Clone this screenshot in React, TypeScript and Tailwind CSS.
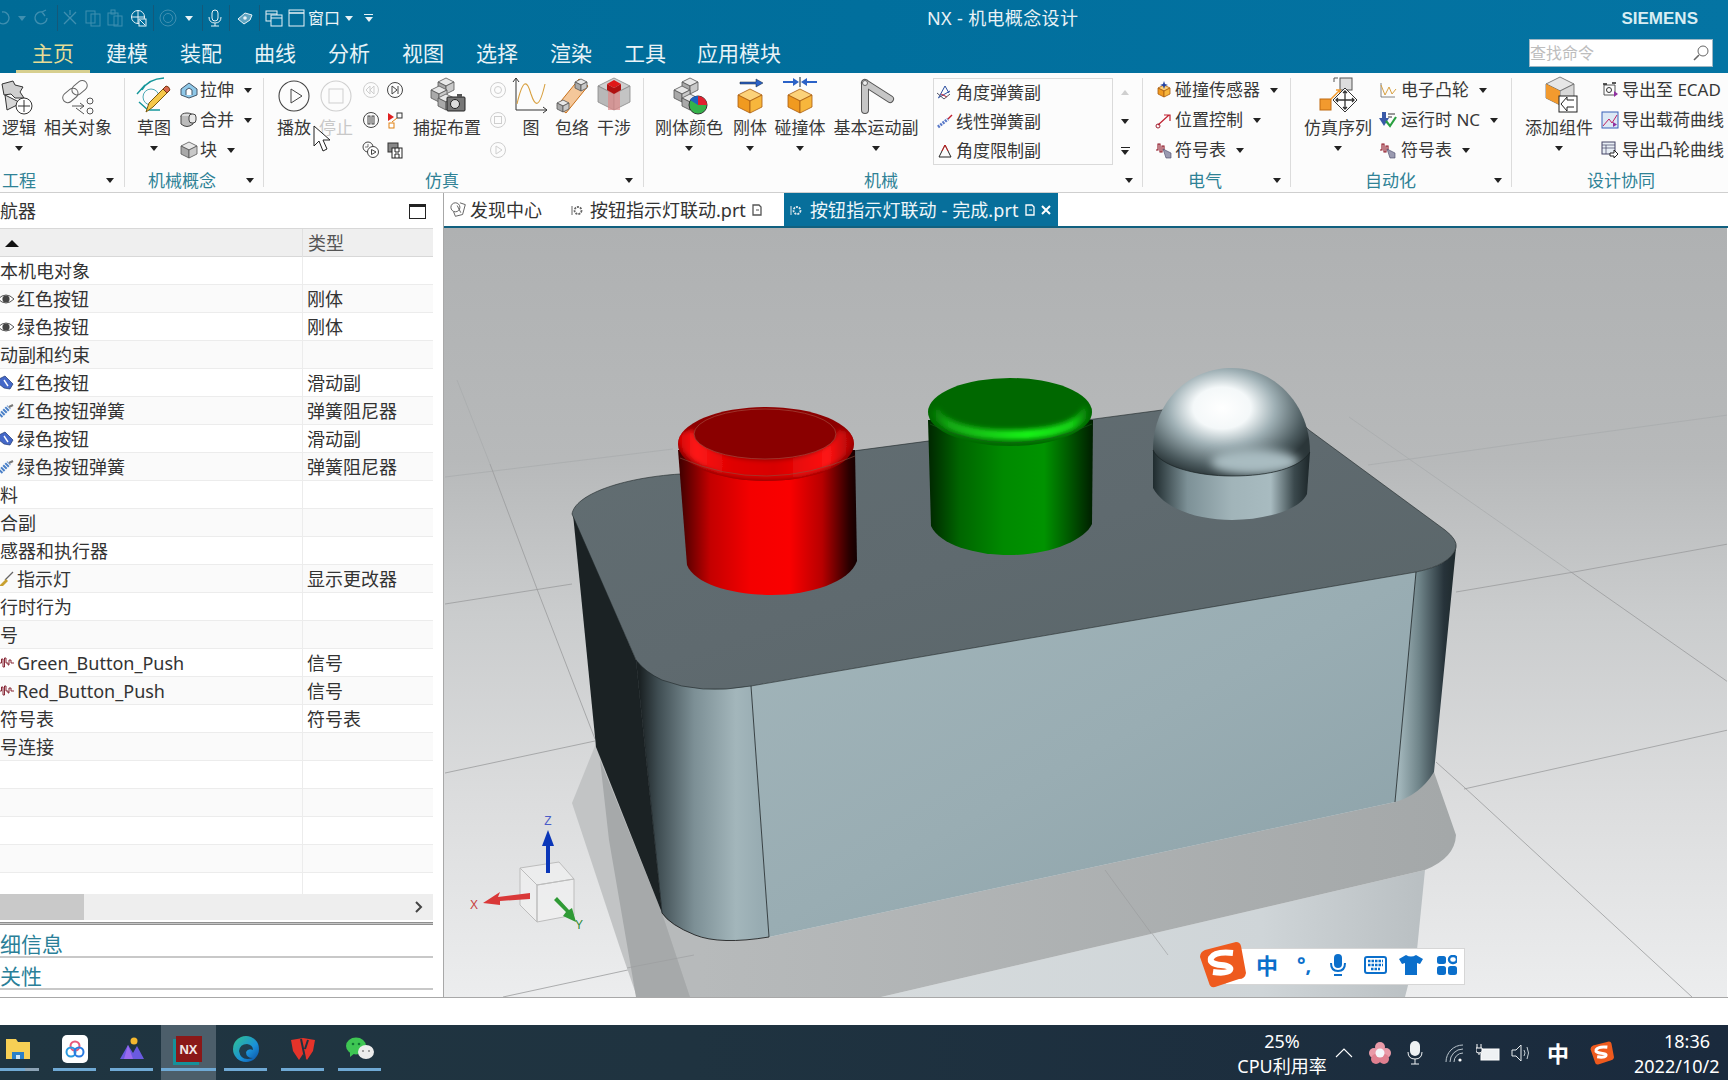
import React from "react";

const F = "font-['Noto_Sans','Noto_Sans_CJK_SC',sans-serif]";

function Caret({ c = "border-t-[#222]" }: { c?: string }) {
  return <span className={`inline-block w-0 h-0 border-x-[4px] border-t-[5px] border-x-transparent ${c}`} />;
}

function Cube({ x, y, s, a = "#e8e8e8", b = "#a9a9a9", c = "#c9c9c9", e = "#555" }: { x: number; y: number; s: number; a?: string; b?: string; c?: string; e?: string }) {
  const h = s * 0.5;
  return (
    <g stroke={e} strokeWidth="0.8" strokeLinejoin="round">
      <path d={`M${x},${y} L${x + s},${y + h} L${x},${y + s} L${x - s},${y + h} Z`} fill={a} />
      <path d={`M${x - s},${y + h} L${x},${y + s} L${x},${y + 2 * s} L${x - s},${y + 1.5 * s} Z`} fill={b} />
      <path d={`M${x + s},${y + h} L${x},${y + s} L${x},${y + 2 * s} L${x + s},${y + 1.5 * s} Z`} fill={c} />
    </g>
  );
}

function Ic({ s = 40, vb = 40, children }: { s?: number; vb?: number; children: React.ReactNode }) {
  return (
    <svg width={s} height={s} viewBox={`0 0 ${vb} ${vb}`} fill="none">
      {children}
    </svg>
  );
}

const Logic = () => (
  <Ic>
    <path d="M3,8 L14,5 L16,9 L24,11 L21,16 L25,22 L16,22 L12,18 L5,19 Z" fill="#cfcfcf" stroke="#333" />
    <path d="M6,19 L22,27 L8,34 Z" fill="#d8d8d8" stroke="#333" />
    <circle cx="25" cy="30" r="8" fill="#fff" stroke="#333" />
    <path d="M25,24 V36 M19,30 H31" stroke="#333" />
  </Ic>
);
const Rel = () => (
  <Ic>
    <g stroke="#666" fill="none" transform="rotate(-40 18 16)">
      <rect x="3" y="10" width="17" height="10" rx="5" />
      <rect x="15" y="10" width="17" height="10" rx="5" />
    </g>
    <path d="M14,30 H26 M22,27 L26,30 L22,33 M18,32 L26,38" stroke="#555" />
    <circle cx="32" cy="25" r="3" stroke="#555" />
    <circle cx="32" cy="35" r="3" stroke="#555" />
  </Ic>
);
const Sketch = () => (
  <Ic>
    <path d="M8,14 Q14,3 30,2 M3,18 L11,9 M5,26 L14,34 H26" stroke="#14969a" strokeWidth="1.4" />
    <circle cx="17" cy="21" r="8" stroke="#4aa8b4" />
    <path d="M12,36 L15,27 L31,11 L35,15 L19,31 Z" fill="#f5c84a" stroke="#7a5a10" />
    <path d="M29,13 L33,17 L36,14 Q35,10 32,10 Z" fill="#d96a50" stroke="#7a3a10" />
  </Ic>
);
const Sm = ({ children }: { children: React.ReactNode }) => (
  <svg width="18" height="18" viewBox="0 0 18 18" fill="none">
    {children}
  </svg>
);
const Ext = () => (
  <Sm>
    <path d="M1,8 L9,2 L17,8 V14 L9,17 L1,14 Z" fill="#8fc8e8" stroke="#456" />
    <path d="M6,14 V9 L9,7 L12,9 V14" fill="#fff" stroke="#456" />
  </Sm>
);
const Merge = () => (
  <Sm>
    <ellipse cx="7" cy="5" rx="6" ry="3" fill="#ddd" stroke="#444" />
    <path d="M1,5 V13 Q7,18 13,13 V5" fill="#bbb" stroke="#444" />
    <rect x="9" y="3" width="7" height="9" rx="3" fill="#e8e8e8" stroke="#444" />
  </Sm>
);
const Block = () => (
  <Sm>
    <Cube x={9} y={1} s={8} />
  </Sm>
);
const Round = ({ r = 15, c = "#444", children }: { r?: number; c?: string; children?: React.ReactNode }) => (
  <Ic s={r * 2 + 4} vb={r * 2 + 4}>
    <circle cx={r + 2} cy={r + 2} r={r} stroke={c} strokeWidth="1.1" />
    {children}
  </Ic>
);
const SC = ({ c = "#444", children }: { c?: string; children?: React.ReactNode }) => (
  <Sm>
    <circle cx="9" cy="9" r="7.5" stroke={c} />
    {children}
  </Sm>
);
const Capture = () => (
  <Ic>
    <Cube x={19} y={2} s={8} />
    <Cube x={12} y={10} s={8} />
    <Cube x={19} y={18} s={8} />
    <rect x="20" y="21" width="18" height="14" rx="1" fill="#777" stroke="#222" />
    <rect x="30" y="18" width="5" height="3" fill="#555" />
    <circle cx="28" cy="28" r="4.5" fill="#ddd" stroke="#222" />
  </Ic>
);
const Graph = () => (
  <Ic>
    <path d="M5,2 V34 H36 M2,6 L5,2 L8,6 M32,31 L36,34 L32,37" stroke="#333" />
    <path d="M6,28 C12,2 16,4 20,18 C24,30 28,34 34,8" stroke="#d8a040" strokeWidth="1.1" />
  </Ic>
);
const Envelope = () => (
  <Ic>
    <path d="M27,3 L36,10 L14,37 L5,30 Z" fill="#f4c79a" stroke="#c8701a" />
    <Cube x={29} y={3} s={6} />
    <Cube x={11} y={24} s={6} />
  </Ic>
);
const Interf = () => (
  <Ic>
    <Cube x={20} y={2} s={16} a="#d0d0d0" b="#b8b8b8" c="#c4c4c4" e="#888" />
    <rect x="14" y="12" width="12" height="22" fill="#d88" opacity=".7" />
    <path d="M20,4 L27,8 L20,12 L13,8 Z" fill="#e01818" />
    <path d="M13,8 L20,12 V18 L13,14 Z M27,8 L20,12 V18 L27,14 Z" fill="#b01010" />
  </Ic>
);
const Color = () => (
  <Ic>
    <Cube x={21} y={2} s={8} />
    <Cube x={13} y={10} s={8} />
    <Cube x={21} y={18} s={8} />
    <circle cx="29" cy="29" r="9" fill="#35b24a" stroke="#333" />
    <path d="M29,29 V20 A9,9 0 0 1 38,29 Z" fill="#e02030" />
    <path d="M29,29 L21,24 A9,9 0 0 1 29,20 Z" fill="#2060c0" />
  </Ic>
);
const Rigid = () => (
  <Ic>
    <path d="M10,6 H26 V3 L33,7 L26,11 V8 H10 Z" fill="#2b62c8" stroke="#123" strokeWidth=".5" />
    <Cube x={20} y={13} s={12} a="#fcd27a" b="#f09a20" c="#f7b63c" e="#a85c10" />
  </Ic>
);
const Coll = () => (
  <Ic>
    <path d="M3,5 H13 V2 L19,6 L13,10 V7 H3 Z M37,5 H27 V2 L21,6 L27,10 V7 H37 Z" fill="#2b62c8" />
    <path d="M20,1 V11" stroke="#123" />
    <Cube x={20} y={13} s={12} a="#fcd27a" b="#f09a20" c="#f7b63c" e="#a85c10" />
  </Ic>
);
const Joint = () => (
  <Ic>
    <path d="M9,7 L34,23 M9,7 V34" stroke="#555" strokeWidth="8" strokeLinecap="round" />
    <path d="M9,7 L34,23 M9,7 V34" stroke="#c6c6c6" strokeWidth="6" strokeLinecap="round" />
    <circle cx="9" cy="7" r="2.5" fill="#eee" stroke="#666" />
  </Ic>
);
const Sensor = () => (
  <Sm>
    <Cube x={9} y={4} s={6} a="#fcd27a" b="#f09a20" c="#f7b63c" e="#a85c10" />
    <path d="M9,0 L10,3 L13,4 L10,5 L9,8 L8,5 L5,4 L8,3 Z" fill="#2040a0" />
  </Sm>
);
const Pos = () => (
  <Sm>
    <path d="M3,14 L14,4 M9,4 H15 V10" stroke="#c02030" strokeWidth="1.2" />
    <circle cx="3" cy="15" r="2" stroke="#a02030" />
  </Sm>
);
const Sig = () => (
  <Sm>
    <path d="M1,9 H3 V3 H5 V11 H7 V5 H9 V9" stroke="#8a1020" strokeWidth="1.1" />
    <path d="M8,8 L16,12 V17 H11 Z" fill="#9a9ab0" stroke="#446" strokeWidth=".6" />
  </Sm>
);
const SeqI = () => (
  <Ic>
    <rect x="22" y="2" width="12" height="12" fill="#ddd" stroke="#555" />
    <path d="M16,2 H20 M16,2 V6" stroke="#555" />
    <rect x="2" y="23" width="11" height="11" fill="#f29a2e" stroke="#c06a10" />
    <path d="M13,23 L22,14 M18,14 H22 V18" stroke="#f29a2e" strokeWidth="1.5" />
    <path d="M27,12 L39,24 L27,36 L15,24 Z" fill="#fff" stroke="#333" />
    <path d="M27,15 V33 M18,24 H36 M25,17 L27,15 L29,17 M25,31 L27,33 L29,31 M20,22 L18,24 L20,26 M34,22 L36,24 L34,26" stroke="#333" strokeWidth="1.3" />
  </Ic>
);
const Cam = () => (
  <Sm>
    <path d="M2,2 V16 H16" stroke="#666" strokeWidth=".8" />
    <path d="M2,4 L6,14 L10,6 L13,13 L17,8" stroke="#d8a040" />
  </Sm>
);
const RunNc = () => (
  <Sm>
    <path d="M3,1 H7 V7 H10 L5,15 L0,7 H3 Z" fill="#3a5aa8" />
    <path d="M7,10 L11,15 L17,6" stroke="#2aa040" strokeWidth="2.2" />
    <path d="M9,3 H16 M9,6 H13" stroke="#333" />
  </Sm>
);
const AddC = () => (
  <Ic>
    <Cube x={21} y={1} s={14} a="#e6e6e6" b="#f09a20" c="#d8d8d8" e="#666" />
    <path d="M7,8 L21,15 V29 L7,22 Z" fill="#f29a2e" />
    <rect x="20" y="20" width="18" height="16" fill="#fff" stroke="#222" />
    <path d="M35,24 H28 V21 L22,28 L28,35 V31 H35" fill="#fff" stroke="#222" />
  </Ic>
);
const ExpE = () => (
  <Sm>
    <path d="M3,4 H14 V14 H3 Z" stroke="#444" strokeWidth=".9" />
    <circle cx="8" cy="9" r="2.5" stroke="#333" />
    <path d="M2,3 H6 M11,2 H15" stroke="#222" strokeWidth="1.6" />
    <path d="M13,10 L17,13 L13,16 Z" fill="#9030a0" />
  </Sm>
);
const ExpL = () => (
  <Sm>
    <rect x="1" y="1" width="16" height="16" fill="#dce8f5" stroke="#3860b8" />
    <path d="M2,15 L8,8 L11,12 L16,4" stroke="#c02060" strokeWidth="1" />
    <path d="M12,11 L16,13.5 L12,16 Z" fill="#9030a0" />
  </Sm>
);
const ExpC = () => (
  <Sm>
    <rect x="1" y="1" width="13" height="12" fill="#e8eef5" stroke="#446" />
    <path d="M1,4 H14 M1,7 H14 M5,4 V13" stroke="#446" strokeWidth=".7" />
    <path d="M9,12 H13 V9 L17,13 L13,17 V15 H9 Z" fill="#fff" stroke="#222" />
  </Sm>
);
const GalA = () => (
  <Sm>
    <path d="M3,13 L9,2 L13,9 M2,14 L14,7" stroke="#2b4ea0" />
    <path d="M5,10 L11,13" stroke="#c02030" />
    <path d="M1,9 L8,15 L14,10" stroke="#556" />
  </Sm>
);
const GalB = () => (
  <Sm>
    <path d="M2,14 L12,6" stroke="#5878c8" strokeWidth="3" strokeDasharray="2 1" />
    <path d="M12,6 L16,2" stroke="#c02030" strokeWidth="1.5" />
  </Sm>
);
const GalC = () => (
  <Sm>
    <path d="M3,15 L9,3 L15,15 Z" stroke="#222" />
    <path d="M9,3 L6,9 M9,3 L12,9" stroke="#d02020" />
  </Sm>
);

function Big({ w, label, icon, caret, gray, ml = 0 }: { w: number; label: string; icon?: React.ReactNode; caret?: boolean; gray?: boolean; ml?: number }) {
  return (
    <div className="flex flex-col items-center flex-none" style={{ width: w, marginLeft: ml }}>
      <div className="h-[42px] flex items-center justify-center">{icon}</div>
      <div className={`h-[22px] leading-[22px] whitespace-nowrap text-[17px] ${gray ? "text-[#c8c8c8]" : "text-[#383838]"}`}>{label}</div>
      <div className="h-[18px] flex items-center">{caret && <Caret />}</div>
    </div>
  );
}

function Row({ icon, label, caret, iw = 22 }: { icon: React.ReactNode; label: string; caret?: boolean; iw?: number }) {
  return (
    <div className="h-[30px] flex items-center text-[17px] text-[#383838] whitespace-nowrap">
      <div className="flex-none flex justify-center" style={{ width: iw }}>
        {icon}
      </div>
      <span>{label}</span>
      {caret && (
        <span className="ml-[10px] flex items-center">
          <Caret />
        </span>
      )}
    </div>
  );
}

function Col({ ml, w = 20, items }: { ml: number; w?: number; items: React.ReactNode[] }) {
  return (
    <div className="flex-none" style={{ marginLeft: ml, width: w }}>
      {items.map((it, i) => (
        <div key={i} className="h-[30px] flex items-center justify-center">
          {it}
        </div>
      ))}
    </div>
  );
}

function Group({ w, label, pl, pr, caret = true, children }: { w: number; label: string; pl: number; pr: number; caret?: boolean; children: React.ReactNode }) {
  return (
    <div className="flex-none flex flex-col pt-[2px] overflow-hidden" style={{ width: w }}>
      <div className="h-[90px] flex">{children}</div>
      <div className="h-[27px] pt-[3px] flex items-center justify-between" style={{ paddingLeft: pl, paddingRight: pr }}>
        <span className="text-[17px] text-[#2f8296] whitespace-nowrap leading-none">{label}</span>
        {caret && <Caret />}
      </div>
    </div>
  );
}

const Sep = () => <div className="flex-none w-px my-[5px] -ml-px bg-[#dcdcdc]" />;

const QIcon = ({ children, w = 18 }: { children: React.ReactNode; w?: number }) => (
  <svg width={w} height="18" viewBox="0 0 18 18" fill="none" className="flex-none">
    {children}
  </svg>
);
const QDiv = () => <div className="flex-none w-px h-[26px] bg-[#14597a]" />;

function TopBar() {
  const dim = "#3f8fb0";
  return (
    <div className="h-[36px] flex items-center">
      <div className="w-[927px] flex-none flex items-center overflow-hidden">
        <div className="w-[12px] overflow-hidden flex justify-end flex-none">
          <QIcon>
            <path d="M3,9 A6,6 0 1 0 8,3" stroke={dim} strokeWidth="1.3" />
          </QIcon>
        </div>
        <span className="ml-[6px] flex items-center">
          <Caret c="border-t-[#3f8fb0]" />
        </span>
        <span className="ml-[6px]">
          <QIcon>
            <path d="M15,9 A6,6 0 1 1 10,3 M10,3 L14,1 M10,3 L13,7" stroke={dim} strokeWidth="1.3" />
          </QIcon>
        </span>
        <span className="ml-[7px]"><QDiv /></span>
        <span className="ml-[3px]">
          <QIcon>
            <path d="M3,3 L9,9 L15,3 M3,15 L9,9 L15,15 M9,1 V6" stroke={dim} strokeWidth="1.3" />
          </QIcon>
        </span>
        <span className="ml-[5px]">
          <QIcon>
            <rect x="2" y="2" width="9" height="12" stroke={dim} />
            <rect x="7" y="5" width="9" height="12" stroke={dim} />
          </QIcon>
        </span>
        <span className="ml-[4px]">
          <QIcon>
            <rect x="2" y="4" width="10" height="12" stroke={dim} />
            <rect x="8" y="7" width="8" height="10" stroke={dim} />
            <rect x="5" y="1" width="4" height="4" stroke={dim} />
          </QIcon>
        </span>
        <span className="ml-[6px]">
          <QIcon>
            <circle cx="8" cy="8" r="6.5" stroke="#e8f2f6" />
            <path d="M8,1 V15 M1,8 H15" stroke="#e8f2f6" />
            <rect x="9" y="10" width="7" height="7" fill="#006f9d" stroke="#e8f2f6" />
            <path d="M10,11 L15,16" stroke="#e8f2f6" />
          </QIcon>
        </span>
        <span className="ml-[5px]"><QDiv /></span>
        <span className="ml-[5px]">
          <QIcon>
            <circle cx="9" cy="9" r="8" stroke={dim} />
            <circle cx="9" cy="9" r="4.5" stroke={dim} />
          </QIcon>
        </span>
        <span className="ml-[8px] flex items-center"><Caret c="border-t-[#e8f2f6]" /></span>
        <span className="ml-[9px]"><QDiv /></span>
        <span className="ml-[3px]">
          <QIcon>
            <rect x="6" y="1" width="6" height="11" rx="3" stroke="#e8f2f6" />
            <path d="M3,8 Q3,14 9,14 Q15,14 15,8 M9,14 V17 M5,17 H13" stroke="#e8f2f6" />
          </QIcon>
        </span>
        <span className="ml-[5px]"><QDiv /></span>
        <span className="ml-[6px]">
          <QIcon>
            <path d="M2,10 L9,4 L16,6 L14,11 L8,15 Z" stroke="#e8f2f6" fill="#5da3c0" />
            <circle cx="9" cy="9" r="1.8" fill="#e8f2f6" />
          </QIcon>
        </span>
        <span className="ml-[5px]"><QDiv /></span>
        <span className="ml-[5px]">
          <QIcon>
            <rect x="1" y="2" width="11" height="10" stroke="#e8f2f6" />
            <rect x="6" y="6" width="11" height="11" fill="#006f9d" stroke="#e8f2f6" />
            <path d="M1,5 H12 M6,9 H17" stroke="#e8f2f6" />
          </QIcon>
        </span>
        <span className="ml-[5px]">
          <QIcon>
            <rect x="1" y="1" width="15" height="16" stroke="#e8f2f6" />
            <path d="M1,4 H16" stroke="#e8f2f6" strokeWidth="1.5" />
          </QIcon>
        </span>
        <span className="ml-[2px] text-[16px] text-[#eef5f8] leading-none whitespace-nowrap">窗口</span>
        <span className="ml-[5px] flex items-center"><Caret c="border-t-[#e8f2f6]" /></span>
        <span className="ml-[11px] flex flex-col items-center gap-[2px]">
          <span className="w-[9px] h-px bg-[#e8f2f6]" />
          <Caret c="border-t-[#e8f2f6]" />
        </span>
      </div>
      <div className="text-[18px] tracking-[0.35px] text-[#e9f2f6] whitespace-nowrap leading-none">NX - 机电概念设计</div>
      <div className="ml-auto mr-[30px] text-[17px] font-bold text-[#d8edf3] font-['Liberation_Sans',sans-serif] leading-none">SIEMENS</div>
    </div>
  );
}

function Menu() {
  const items: [string, number][] = [
    ["主页", 74],
    ["建模", 74],
    ["装配", 74],
    ["曲线", 74],
    ["分析", 74],
    ["视图", 74],
    ["选择", 74],
    ["渲染", 74],
    ["工具", 74],
    ["应用模块", 114],
  ];
  return (
    <div className="h-[37px] flex items-stretch pl-[16px]">
      {items.map(([t, w], i) => (
        <div
          key={t}
          className={`flex-none flex items-center justify-center pt-[1px] text-[21px] leading-none border-b-[3px] ${i === 0 ? "text-[#e6dd96] border-[#d7cf8f]" : "text-[#e8f3f7] border-transparent"}`}
          style={{ width: w }}
        >
          {t}
        </div>
      ))}
      <div className="ml-auto mr-[15px] mt-[3px] mb-[6px] w-[184px] bg-white border border-[#9fb7c4] flex items-center justify-between">
        <span className="text-[16px] text-[#bdbdbd] leading-none">查找命令</span>
        <svg width="18" height="18" viewBox="0 0 18 18" fill="none" className="mr-[2px]">
          <circle cx="11" cy="7" r="5" stroke="#666" />
          <path d="M7,11 L2,16" stroke="#666" strokeWidth="1.6" />
        </svg>
      </div>
    </div>
  );
}

function Ribbon() {
  const g = "#cfcfcf";
  return (
    <div className="h-[120px] flex bg-[#fcfcfc] border-b border-[#cfcfcf] overflow-hidden relative">
      <Group w={125} label="工程" pl={2} pr={11}>
        <Big w={38} label="逻辑" icon={<Logic />} caret />
        <Big ml={6} w={68} label="相关对象" icon={<Rel />} />
      </Group>
      <Sep />
      <Group w={139} label="机械概念" pl={23} pr={10}>
        <Big ml={12} w={34} label="草图" icon={<Sketch />} caret />
        <div className="ml-[7px] flex-none">
          <Row icon={<Ext />} label="拉伸" caret />
          <Row icon={<Merge />} label="合并" caret />
          <Row icon={<Block />} label="块" caret />
        </div>
      </Group>
      <Sep />
      <Group w={380} label="仿真" pl={161} pr={11}>
        <Big ml={12} w={36} label="播放" icon={<Round><path d="M14,10 L25,17 L14,24 Z" stroke="#444" /></Round>} />
        <Big ml={6} w={36} gray label="停止" icon={<Round c={g}><rect x="10" y="10" width="14" height="14" stroke={g} /></Round>} />
        <Col
          ml={7}
          items={[
            <SC c={g}><path d="M4,9 L8,5 V13 Z M8,9 L12,5 V13 Z" stroke={g} /></SC>,
            <SC><rect x="6" y="5" width="2" height="8" stroke="#444" /><rect x="10" y="5" width="2" height="8" stroke="#444" /></SC>,
            <Sm><circle cx="6" cy="6" r="5" stroke="#444" /><circle cx="11" cy="11" r="5.5" fill="#fff" stroke="#444" /><path d="M9.5,8.5 L14,11 L9.5,13.5 Z" stroke="#444" /><path d="M6,3 V6 H3" stroke="#444" strokeWidth=".7" /></Sm>,
          ]}
        />
        <Col
          ml={4}
          items={[
            <SC><path d="M6,5 L11,9 L6,13 Z M12,5 V13" stroke="#444" /></SC>,
            <Sm><path d="M2,2 L8,6 L2,10 Z" fill="#e02020" /><rect x="11" y="2" width="5" height="5" stroke="#333" /><rect x="3" y="12" width="5" height="5" fill="#fff" stroke="#e08010" /><path d="M6,11 L11,7" stroke="#e08010" /></Sm>,
            <Sm><rect x="2" y="2" width="10" height="9" fill="#888" stroke="#333" /><rect x="6" y="7" width="10" height="10" fill="#fff" stroke="#222" /><path d="M9,7 V11 H13 V7 M9,17 V13 H13 V17" stroke="#222" /></Sm>,
          ]}
        />
        <Big ml={8} w={68} label="捕捉布置" icon={<Capture />} />
        <Col
          ml={7}
          items={[
            <SC c={g}><circle cx="9" cy="9" r="3.5" stroke={g} /></SC>,
            <SC c={g}><rect x="5.5" y="5.5" width="7" height="7" stroke={g} /></SC>,
            <SC c={g}><path d="M7,5 L13,9 L7,13 Z" stroke={g} /></SC>,
          ]}
        />
        <Big ml={10} w={26} label="图" icon={<Graph />} />
        <Big ml={10} w={36} label="包络" icon={<Envelope />} />
        <Big ml={6} w={36} label="干涉" icon={<Interf />} />
      </Group>
      <Sep />
      <Group w={499} label="机械" pl={220} pr={10}>
        <Big ml={11} w={68} label="刚体颜色" icon={<Color />} caret />
        <Big ml={9} w={36} label="刚体" icon={<Rigid />} caret />
        <Big ml={6} w={52} label="碰撞体" icon={<Coll />} caret />
        <Big ml={7} w={86} label="基本运动副" icon={<Joint />} caret />
        <div className="ml-[14px] mt-[3px] w-[180px] h-[87px] flex-none border border-[#dadada]">
          {[
            ["角度弹簧副", <GalA />],
            ["线性弹簧副", <GalB />],
            ["角度限制副", <GalC />],
          ].map(([t, ic], i) => (
            <div key={i} className="h-[29px] pb-[2px] flex items-center text-[17px] text-[#383838] whitespace-nowrap">
              <span className="w-[22px] flex justify-center">{ic}</span>
              {t}
            </div>
          ))}
        </div>
        <div className="w-[24px] mt-[3px] flex-none flex flex-col items-center">
          <div className="h-[29px] flex items-center">
            <span className="w-0 h-0 border-x-[4px] border-b-[5px] border-x-transparent border-b-[#cfcfcf]" />
          </div>
          <div className="h-[29px] flex items-center"><Caret /></div>
          <div className="h-[29px] flex flex-col items-center justify-center gap-[2px]">
            <span className="w-[9px] h-px bg-[#222]" />
            <Caret />
          </div>
        </div>
      </Group>
      <Sep />
      <Group w={148} label="电气" pl={45} pr={10}>
        <div className="ml-[10px]">
          <Row icon={<Sensor />} label="碰撞传感器" caret />
          <Row icon={<Pos />} label="位置控制" caret />
          <Row icon={<Sig />} label="符号表" caret />
        </div>
      </Group>
      <Sep />
      <Group w={221} label="自动化" pl={74} pr={10}>
        <Big ml={13} w={68} label="仿真序列" icon={<SeqI />} caret />
        <div className="ml-[2px]">
          <Row iw={27} icon={<Cam />} label="电子凸轮" caret />
          <Row iw={27} icon={<RunNc />} label="运行时 NC" caret />
          <Row iw={27} icon={<Sig />} label="符号表" caret />
        </div>
      </Group>
      <Sep />
      <Group w={216} label="设计协同" pl={75} pr={0} caret={false}>
        <Big ml={13} w={68} label="添加组件" icon={<AddC />} caret />
        <div className="ml-[4px]">
          <Row iw={25} icon={<ExpE />} label="导出至 ECAD" />
          <Row iw={25} icon={<ExpL />} label="导出载荷曲线" />
          <Row iw={25} icon={<ExpC />} label="导出凸轮曲线" />
        </div>
      </Group>
      <svg width="20" height="28" viewBox="0 0 20 28" className="absolute left-[313px] top-[52px]">
        <path d="M1,1 V21 L6,16 L10,26 L14,24 L10,15 L17,15 Z" fill="#fff" stroke="#222" strokeWidth="1" />
      </svg>
    </div>
  );
}

const Eye = () => (
  <svg width="14" height="14" viewBox="0 0 14 14" fill="none">
    <path d="M-2,7 Q6,-1 14,7 Q6,15 -2,7 Z" stroke="#555" fill="#fff" />
    <circle cx="6" cy="7" r="3.6" fill="#444" />
  </svg>
);
const Slide = () => (
  <svg width="14" height="16" viewBox="0 0 14 16">
    <path d="M-1,4 L5,1 L13,9 L10,14 L4,13 L-1,9 Z" fill="#4468c8" stroke="#203870" strokeWidth=".7" />
    <path d="M4,5 L8,11" stroke="#fff" strokeWidth="1.4" />
  </svg>
);
const Spring = () => (
  <svg width="14" height="16" viewBox="0 0 14 16">
    <path d="M0,13 L9,4" stroke="#4a80c8" strokeWidth="5" strokeDasharray="2 1" />
    <path d="M9,4 L13,2" stroke="#777" strokeWidth="2" />
  </svg>
);
const Brush = () => (
  <svg width="14" height="16" viewBox="0 0 14 16" fill="none">
    <path d="M13,1 L5,9" stroke="#666" strokeWidth="1.2" />
    <path d="M6,8 L8,10 L3,15 L-1,15 Z" fill="#c8a030" />
  </svg>
);
const Wave = () => (
  <svg width="14" height="12" viewBox="0 0 14 12" fill="none">
    <path d="M0,6 H1.5 V2 H3 V10 H4.5 V1 H6 V6 H8 V8 H9 V3 H11 V6 H14" stroke="#7a1020" strokeWidth=".9" />
  </svg>
);

const rows: [React.ReactNode, string, string][] = [
  [null, "本机电对象", ""],
  [<Eye />, "红色按钮", "刚体"],
  [<Eye />, "绿色按钮", "刚体"],
  [null, "动副和约束", ""],
  [<Slide />, "红色按钮", "滑动副"],
  [<Spring />, "红色按钮弹簧", "弹簧阻尼器"],
  [<Slide />, "绿色按钮", "滑动副"],
  [<Spring />, "绿色按钮弹簧", "弹簧阻尼器"],
  [null, "料", ""],
  [null, "合副", ""],
  [null, "感器和执行器", ""],
  [<Brush />, "指示灯", "显示更改器"],
  [null, "行时行为", ""],
  [null, "号", ""],
  [<Wave />, "Green_Button_Push", "信号"],
  [<Wave />, "Red_Button_Push", "信号"],
  [null, "符号表", "符号表"],
  [null, "号连接", ""],
  [null, "", ""],
  [null, "", ""],
  [null, "", ""],
  [null, "", ""],
  [null, "", ""],
];

function Navigator() {
  return (
    <div className="w-[444px] flex-none border-r border-[#a8a8a8] flex flex-col bg-white">
      <div className="h-[35px] pt-[1px] flex items-center justify-between pr-[17px]">
        <span className="text-[18px] text-[#333] leading-none">航器</span>
        <span className="w-[17px] h-[15px] border border-[#222] border-t-[3px]" />
      </div>
      <div className="w-[433px] flex-none">
        <div className="h-[29px] grid grid-cols-[303px_130px] bg-[#efefef] border-t border-[#d8d8d8] border-b border-b-[#d8d8d8]">
          <div className="flex items-center pl-[5px] border-r border-[#e0e0e0]">
            <span className="w-0 h-0 border-x-[7px] border-b-[7px] border-x-transparent border-b-[#111]" />
          </div>
          <div className="flex items-center pl-[5px] pt-[1px] text-[18px] text-[#555]">类型</div>
        </div>
        <div className="h-[637px] overflow-hidden">
          {rows.map(([ic, t, ty], i) => (
            <div key={i} className={`h-[28px] grid grid-cols-[303px_130px] border-b border-[#ececec] text-[18px] text-[#333] ${i % 2 ? "bg-[#fafafa]" : "bg-white"}`}>
              <div className="flex items-center border-r border-[#ececec] whitespace-nowrap leading-none">
                {ic && <span className="w-[17px] flex-none flex items-center">{ic}</span>}
                <span>{t}</span>
              </div>
              <div className="flex items-center pl-[4px] whitespace-nowrap leading-none">{ty}</div>
            </div>
          ))}
        </div>
        <div className="h-[26px] bg-[#eeeeee] flex items-center justify-between pr-[9px]">
          <div className="w-[84px] h-full bg-[#c9c9c9]" />
          <svg width="10" height="14" viewBox="0 0 10 14" fill="none">
            <path d="M2,2 L7,7 L2,12" stroke="#444" strokeWidth="2" />
          </svg>
        </div>
        <div className="mt-[2px] h-[3px] bg-[#c4c4c4] border-y border-[#8f8f8f]" />
        <div className="h-[33px] pt-[7px] flex items-center text-[21px] leading-none text-[#2a7f98] border-b-2 border-[#c8c8c8]">细信息</div>
        <div className="h-[32px] pt-[7px] flex items-center text-[21px] leading-none text-[#2a7f98] border-b-2 border-[#c8c8c8]">关性</div>
      </div>
    </div>
  );
}

function Tabs() {
  return (
    <div className="h-[35px] flex items-stretch text-[18px] text-[#333] border-b-2 border-[#11607f] bg-white">
      <div className="flex items-center pl-[6px] pt-[1px] w-[121px] flex-none whitespace-nowrap">
        <svg width="18" height="18" viewBox="0 0 20 18" fill="none">
          <circle cx="6" cy="6" r="5" stroke="#555" />
          <path d="M11,1 L17,3 L14,14 L6,16 L4,11" stroke="#555" />
          <path d="M8,4 L12,12" stroke="#555" />
        </svg>
        <span className="ml-[2px]">发现中心</span>
      </div>
      <div className="flex items-center w-[219px] flex-none pl-[6px] pt-[1px] whitespace-nowrap">
        <Gear c="#666" />
        <span className="ml-[6px]">按钮指示灯联动.prt</span>
        <Doc c="#555" />
      </div>
      <div className="flex items-center w-[274px] flex-none bg-[#076f9b] text-[#eef6f9] pl-[6px] pt-[1px] whitespace-nowrap">
        <Gear c="#dfe9ee" />
        <span className="ml-[7px] tracking-[0.1px]">按钮指示灯联动 - 完成.prt</span>
        <Doc c="#fff" />
        <svg width="10" height="10" viewBox="0 0 10 10" className="ml-[5px]">
          <path d="M1,1 L9,9 M9,1 L1,9" stroke="#fff" strokeWidth="2" />
        </svg>
      </div>
    </div>
  );
}
const Gear = ({ c }: { c: string }) => (
  <svg width="13" height="15" viewBox="0 0 13 15" fill="none" className="flex-none">
    <circle cx="7" cy="7.5" r="3.5" stroke={c} strokeWidth="1.8" strokeDasharray="2 1" />
    <path d="M1,3 V12" stroke={c} />
  </svg>
);
const Doc = ({ c }: { c: string }) => (
  <svg width="12" height="14" viewBox="0 0 12 14" fill="none" className="ml-[5px] flex-none">
    <path d="M2,2 H8 L10,4 V12 H2 Z" stroke={c} strokeWidth="1.3" />
    <path d="M5,7 H8" stroke={c} />
  </svg>
);

function Scene() {
  const faint = [
    "M445,477 L673,449",
    "M457,380 L490,464",
    "M1368,465 L1545,440 L1728,415",
    "M1349,417 L1571,572",
  ];
  const floor = [
    "M445,604 L572,584",
    "M445,773 L595,741",
    "M490,464 L537,589 L595,739",
    "M503,997 L637,968",
    "M1571,572 L1728,682",
    "M1456,592 L1574,572 L1728,544",
    "M1436,762 L1464,787 L1692,997",
    "M1464,789 L1728,730",
    "M1198,996 L1168,955",
  ];
  return (
    <svg width="1283" height="769" viewBox="444 228 1283 769" className="block">
      <defs>
        <linearGradient id="bg" x1="0" y1="0" x2="0" y2="1">
          <stop offset="0" stopColor="#afb1b2" />
          <stop offset=".3" stopColor="#b7b9ba" />
          <stop offset=".5" stopColor="#cacccd" />
          <stop offset=".75" stopColor="#dcddde" />
          <stop offset="1" stopColor="#ecedee" />
        </linearGradient>
        <linearGradient id="top" x1="0" y1="0" x2="1" y2="1">
          <stop offset="0" stopColor="#626e72" />
          <stop offset=".5" stopColor="#5f6a6f" />
          <stop offset="1" stopColor="#596568" />
        </linearGradient>
        <linearGradient id="front" x1="0" y1="0" x2="1" y2="1">
          <stop offset="0" stopColor="#a2b5ba" />
          <stop offset=".5" stopColor="#99adb3" />
          <stop offset="1" stopColor="#8ba1a8" />
        </linearGradient>
        <linearGradient id="rl" gradientUnits="userSpaceOnUse" x1="640" y1="0" x2="760" y2="0">
          <stop offset="0" stopColor="#1b2224" />
          <stop offset=".15" stopColor="#3f4d52" />
          <stop offset=".45" stopColor="#7c8f95" />
          <stop offset=".8" stopColor="#a3b6bb" />
          <stop offset="1" stopColor="#98acb2" />
        </linearGradient>
        <linearGradient id="rr" gradientUnits="userSpaceOnUse" x1="1400" y1="0" x2="1455" y2="0">
          <stop offset="0" stopColor="#a0b4b9" />
          <stop offset=".35" stopColor="#6f8489" />
          <stop offset=".8" stopColor="#27333a" />
          <stop offset="1" stopColor="#1f2a2d" />
        </linearGradient>
        <linearGradient id="red" gradientUnits="userSpaceOnUse" x1="678" y1="0" x2="858" y2="0">
          <stop offset="0" stopColor="#3a0000" />
          <stop offset=".18" stopColor="#c40000" />
          <stop offset=".4" stopColor="#f40000" />
          <stop offset=".62" stopColor="#fa0000" />
          <stop offset=".8" stopColor="#b80000" />
          <stop offset=".95" stopColor="#2a0000" />
          <stop offset="1" stopColor="#100000" />
        </linearGradient>
        <linearGradient id="redT" gradientUnits="userSpaceOnUse" x1="678" y1="0" x2="855" y2="0">
          <stop offset="0" stopColor="#d00000" />
          <stop offset=".1" stopColor="#ff1a1a" />
          <stop offset=".3" stopColor="#e00000" />
          <stop offset=".55" stopColor="#d80000" />
          <stop offset=".85" stopColor="#ff1414" />
          <stop offset="1" stopColor="#a00000" />
        </linearGradient>
        <linearGradient id="grn" gradientUnits="userSpaceOnUse" x1="930" y1="0" x2="1093" y2="0">
          <stop offset="0" stopColor="#002a00" />
          <stop offset=".18" stopColor="#006500" />
          <stop offset=".45" stopColor="#008a00" />
          <stop offset=".7" stopColor="#009300" />
          <stop offset=".85" stopColor="#005a00" />
          <stop offset="1" stopColor="#001e00" />
        </linearGradient>
        <linearGradient id="grnT" gradientUnits="userSpaceOnUse" x1="928" y1="0" x2="1093" y2="0">
          <stop offset="0" stopColor="#006000" />
          <stop offset=".12" stopColor="#12a812" />
          <stop offset=".6" stopColor="#18f818" />
          <stop offset=".88" stopColor="#12d012" />
          <stop offset="1" stopColor="#005000" />
        </linearGradient>
        <linearGradient id="dmB" gradientUnits="userSpaceOnUse" x1="1153" y1="0" x2="1310" y2="0">
          <stop offset="0" stopColor="#1f2b2e" />
          <stop offset=".22" stopColor="#7d9197" />
          <stop offset=".5" stopColor="#a1b4b9" />
          <stop offset=".75" stopColor="#a8bbc0" />
          <stop offset=".9" stopColor="#3b494d" />
          <stop offset="1" stopColor="#1c2629" />
        </linearGradient>
        <radialGradient id="dm" gradientUnits="userSpaceOnUse" cx="1222" cy="408" r="96" gradientTransform="translate(1222 408) scale(1 .72) translate(-1222 -408)">
          <stop offset="0" stopColor="#ffffff" />
          <stop offset=".3" stopColor="#f4f8f9" />
          <stop offset=".55" stopColor="#9fb0b5" />
          <stop offset=".85" stopColor="#4d5c60" />
          <stop offset="1" stopColor="#2b3639" />
        </radialGradient>
        <linearGradient id="refl" x1="0" y1="0" x2="1" y2="0">
          <stop offset="0" stopColor="#d6dbdd" />
          <stop offset=".7" stopColor="#cfd5d8" />
          <stop offset="1" stopColor="#b9bfc2" />
        </linearGradient>
        <linearGradient id="band" gradientUnits="userSpaceOnUse" x1="700" y1="0" x2="1450" y2="0">
          <stop offset="0" stopColor="#b7babb" />
          <stop offset="1" stopColor="#a4a8a9" />
        </linearGradient>
        <filter id="bl" x="-40%" y="-40%" width="180%" height="180%">
          <feGaussianBlur stdDeviation="5" />
        </filter>
        <filter id="bs" x="-20%" y="-60%" width="140%" height="220%">
          <feGaussianBlur stdDeviation="2.5" />
        </filter>
        <clipPath id="dmc">
          <path d="M1153,450 C1153,400 1190,368 1232,368 C1275,368 1310,405 1310,452 C1300,468 1270,476 1232,476 C1195,476 1160,466 1153,450 Z" />
        </clipPath>
        <clipPath id="rc">
          <ellipse cx="766" cy="444" rx="88" ry="37" />
        </clipPath>
        <clipPath id="gc">
          <ellipse cx="1010" cy="412" rx="82" ry="34" />
        </clipPath>
      </defs>
      <rect x="444" y="228" width="1283" height="769" fill="url(#bg)" />
      {faint.map((d, i) => (
        <path key={i} d={d} stroke="#a8abac" strokeWidth="0.7" fill="none" />
      ))}
      {floor.map((d, i) => (
        <path key={i} d={d} stroke="#9a9c9d" strokeWidth="0.8" fill="none" />
      ))}
      <path d="M597,741 L572,803 L620,948 L637,997 L720,997 L769,937 Z" fill="#c2c4c5" />
      <path d="M600,760 L609,840 L636,997 L700,997 L662,913 Z" fill="#a6a9aa" />
      <path d="M881,997 L1425,870 L1417,950 L1405,997 Z" fill="url(#refl)" />
      <path d="M1168,955 L1105,870" stroke="#9a9c9d" strokeWidth=".6" />
      <path d="M662,913 Q670,925 695,935 Q720,945 769,937 L1395,802 L1434,772 L1456,835 Q1455,858 1425,870 L881,997 L690,997 Z" fill="url(#band)" />
      <path d="M627,968 L694,955" stroke="#9a9c9d" strokeWidth=".6" />
      <path d="M1105,870 L1151,933" stroke="#989b9c" strokeWidth=".6" />
      <path d="M573,514 L636,660 L662,913 L596,747 Z" fill="#1b2224" />
      <path d="M636,660 Q660,682 713,688 L751,686 L769,937 Q720,945 695,935 Q670,925 662,913 Z" fill="url(#rl)" />
      <path d="M751,686 L1416,572 L1395,802 L769,937 Z" fill="url(#front)" />
      <path d="M1416,572 Q1450,565 1456,548 L1434,772 Q1420,795 1395,802 Z" fill="url(#rr)" />
      <path d="M572,514 C575,495 620,478 680,474 L1162,410 L1240,398 Q1280,400 1309,430 L1445,530 Q1458,540 1456,548 Q1450,565 1416,572 L751,686 Q700,695 662,680 Q645,672 636,660 Z" fill="url(#top)" stroke="#1d2527" strokeWidth=".6" />
      <path d="M751,686 L769,937 M1416,572 L1395,802 M636,660 L662,913" stroke="#1a2224" strokeWidth=".8" fill="none" />
      <path d="M662,913 Q670,925 695,935 Q720,945 769,937" stroke="#111" strokeWidth=".8" fill="none" />

      <path d="M678,450 L687,565 C695,585 735,595 772,595 C810,595 850,582 857,561 L855,450 Z" fill="url(#red)" />
      <ellipse cx="766" cy="444" rx="88" ry="37" fill="#8c0000" />
      <g clipPath="url(#rc)">
        <path d="M684,432 C690,456 725,470 766,470 C808,470 842,456 848,432" stroke="url(#redT)" strokeWidth="20" fill="none" filter="url(#bs)" />
      </g>
      <ellipse cx="765" cy="434" rx="71" ry="25" fill="#8a0000" stroke="#a4483c" strokeWidth=".7" />
      <path d="M680,458 Q766,495 855,456" stroke="#8a5040" strokeWidth=".6" fill="none" />

      <path d="M928,420 L931,526 C940,545 975,555 1010,555 C1050,555 1085,540 1092,524 L1093,420 Z" fill="url(#grn)" />
      <ellipse cx="1010" cy="412" rx="82" ry="34" fill="#006800" />
      <g clipPath="url(#gc)">
        <path d="M934,410 C942,428 975,435 1010,435 C1048,435 1080,428 1088,408" stroke="url(#grnT)" strokeWidth="10" fill="none" filter="url(#bs)" />
      </g>
      <path d="M930,424 Q1010,462 1092,424" stroke="#1a5a1a" strokeWidth=".6" fill="none" />

      <path d="M1153,450 L1153,488 C1165,510 1200,520 1232,520 C1265,520 1300,510 1307,494 L1310,452 Z" fill="url(#dmB)" />
      <path d="M1153,450 C1153,400 1190,368 1232,368 C1275,368 1310,405 1310,452 C1300,468 1270,476 1232,476 C1195,476 1160,466 1153,450 Z" fill="url(#dm)" />
      <g clipPath="url(#dmc)">
        <ellipse cx="1255" cy="462" rx="44" ry="13" fill="#a9bcc1" filter="url(#bl)" />
      </g>
      <path d="M1153,450 C1160,466 1195,476 1232,476 C1270,476 1300,468 1310,452" stroke="#1a2224" strokeWidth=".7" fill="none" />

      <g stroke="#bdbdbd" strokeWidth="1" fill="#f3f3f3" fillOpacity=".6">
        <path d="M520,868 L559,862 L574,879 L537,885 Z M520,868 V905 L537,922 V885 Z M574,879 V915 L537,922 V885 Z" />
      </g>
      <path d="M546,873 V846 H542 L548,830 L554,846 H550 V873 Z" fill="#0a36b8" />
      <path d="M530,893 L498,897 L500,892 L483,903 L500,905 L500,901 L530,899 Z" fill="#d93838" />
      <path d="M554,900 L566,912 L563,916 L576,922 L572,908 L569,910 L557,897 Z" fill="#2f9a35" />
      <text x="548" y="825" fontSize="12" textAnchor="middle" fill="#4a5cc8" fontFamily="Liberation Sans">Z</text>
      <text x="474" y="909" fontSize="12" textAnchor="middle" fill="#c84040" fontFamily="Liberation Sans">X</text>
      <text x="579" y="929" fontSize="12" textAnchor="middle" fill="#2f8a35" fontFamily="Liberation Sans">Y</text>
    </svg>
  );
}

const SogouS = ({ s = 47 }: { s?: number }) => (
  <svg width={s} height={s} viewBox="0 0 47 47">
    <path d="M6,9 L37,1 Q41,1 42,5 L47,32 Q46,38 40,38 L16,46 Q11,47 10,42 L1,16 Q1,11 6,9 Z" fill="#ee5a1e" />
    <path d="M34,12 Q16,10 12,17 Q10,23 22,24 Q33,25 31,29 Q28,33 14,31" stroke="#fff" strokeWidth="6" fill="none" />
  </svg>
);

function Ime() {
  const b = "#0b6fcb";
  return (
    <div className="absolute left-[755px] top-[713px] h-[47px] flex items-center">
      <div className="absolute left-[26px] right-0 top-[7px] h-[37px] bg-white border border-[#d6d6d6]" />
      <span className="relative"><SogouS /></span>
      <div className="relative flex items-center w-[219px] text-[#0b6fcb]">
        <span className="ml-[9px] w-[24px] text-center text-[22px] font-bold leading-none">中</span>
        <span className="ml-[13px] w-[24px] text-center text-[20px] font-bold leading-none">°,</span>
        <svg width="20" height="24" viewBox="0 0 20 24" className="ml-[12px]" fill="none">
          <rect x="6" y="1" width="8" height="14" rx="4" fill={b} />
          <path d="M3,10 Q3,18 10,18 Q17,18 17,10 M6,22 H14" stroke={b} strokeWidth="2" />
        </svg>
        <svg width="23" height="18" viewBox="0 0 23 18" className="ml-[16px]">
          <rect x="1" y="1" width="21" height="16" rx="2" fill="none" stroke={b} strokeWidth="2" />
          <path d="M4,5 H19 M4,9 H19 M7,13 H16" stroke={b} strokeWidth="2.4" strokeDasharray="2.5 1" />
        </svg>
        <svg width="24" height="22" viewBox="0 0 24 22" className="ml-[12px]">
          <path d="M7,1 Q12,4 17,1 L24,5 L21,10 L18,9 V21 H6 V9 L3,10 L0,5 Z" fill={b} />
        </svg>
        <svg width="20" height="20" viewBox="0 0 20 20" className="ml-[14px]">
          <rect x="0" y="1" width="9" height="8" rx="2.5" fill={b} />
          <rect x="12" y="1" width="8" height="7" rx="3.5" fill="none" stroke={b} strokeWidth="2.4" />
          <rect x="0" y="11" width="9" height="9" rx="2.5" fill={b} />
          <rect x="11" y="11" width="9" height="9" rx="2.5" fill={b} />
        </svg>
      </div>
    </div>
  );
}

function Task({ w = 43, ml, active, split, children }: { w?: number; ml: number; active?: boolean; split?: boolean; children: React.ReactNode }) {
  return (
    <div className={`flex-none h-full flex flex-col ${active ? "bg-[#4c5e6a]" : ""}`} style={{ width: w, marginLeft: ml }}>
      <div className="flex-1 flex items-center justify-center pt-[5px]">{children}</div>
      <div className={`h-[3px] mb-[9px] ${split ? "bg-[linear-gradient(90deg,#6fa9d4_65%,#8ca3b5_65%)]" : "bg-[#6fa9d4]"}`} />
    </div>
  );
}

function Taskbar() {
  return (
    <div className="h-[55px] flex items-stretch text-white bg-[linear-gradient(90deg,#1f3541,#1f3340_40%,#1a2a3d)] overflow-hidden">
      <Task ml={0} w={39} split>
        <svg width="26" height="24" viewBox="0 0 26 24" className="-ml-[4px]">
          <path d="M1,2 H11 L13,5 H25 V22 H1 Z" fill="#f6cf55" />
          <rect x="7" y="15" width="12" height="7" fill="#2a7fc8" />
          <rect x="11" y="18" width="4" height="4" fill="#cfe6f6" />
        </svg>
      </Task>
      <Task ml={14}>
        <div className="w-[26px] h-[28px] bg-white rounded-[5px] flex items-center justify-center">
          <svg width="20" height="18" viewBox="0 0 20 18" fill="none">
            <circle cx="10" cy="6" r="4.5" stroke="#e85a7a" strokeWidth="2" />
            <circle cx="6" cy="12" r="4.5" stroke="#2a9ae0" strokeWidth="2" />
            <circle cx="14" cy="12" r="4.5" stroke="#2a7ae0" strokeWidth="2" />
          </svg>
        </div>
      </Task>
      <Task ml={14}>
        <svg width="26" height="24" viewBox="0 0 26 24">
          <circle cx="15" cy="4" r="3.5" fill="#f5b82e" />
          <path d="M1,22 L9,8 L14,16 L18,9 L25,22 Z" fill="#6a5ae0" />
          <path d="M9,8 L14,22 H5 Z" fill="#9a6af0" />
        </svg>
      </Task>
      <Task ml={8} w={55} active>
        <div className="relative w-[26px] h-[26px] bg-[#8a1818] flex items-center justify-center text-[13px] font-bold leading-none font-['Liberation_Sans',sans-serif] text-[#f3e6e6] shadow-[-3px_3px_0_0_#16909a]">
          NX
        </div>
      </Task>
      <Task ml={8}>
        <svg width="26" height="28" viewBox="0 0 26 28">
          <defs>
            <linearGradient id="ed" x1="0" y1="0" x2="1" y2="1">
              <stop offset="0" stopColor="#31c48d" />
              <stop offset=".6" stopColor="#1a90d8" />
              <stop offset="1" stopColor="#0b4aa0" />
            </linearGradient>
          </defs>
          <circle cx="13" cy="14" r="13" fill="url(#ed)" />
          <path d="M6,16 Q7,9 14,9 Q20,10 20,15 Q15,13 13,17 Q13,23 20,23 Q8,27 6,16 Z" fill="#1f3340" opacity=".9" />
        </svg>
      </Task>
      <Task ml={14}>
        <svg width="26" height="24" viewBox="0 0 26 24">
          <path d="M1,3 L13,1 L25,3 L23,14 L17,23 L13,17 L9,23 L3,14 Z" fill="#e5332a" />
          <path d="M11,2 L15,21 M18,3 L15,12" stroke="#1f3340" strokeWidth="2" />
        </svg>
      </Task>
      <Task ml={14}>
        <svg width="28" height="24" viewBox="0 0 28 24">
          <ellipse cx="10" cy="9" rx="10" ry="8.5" fill="#3ec653" />
          <path d="M4,14 L4,20 L9,16 Z" fill="#3ec653" />
          <ellipse cx="20" cy="15" rx="8" ry="7" fill="#ececec" />
          <circle cx="7" cy="7" r="1.3" fill="#173" />
          <circle cx="13" cy="7" r="1.3" fill="#173" />
          <circle cx="17" cy="14" r="1" fill="#888" />
          <circle cx="23" cy="14" r="1" fill="#888" />
        </svg>
      </Task>
      <div className="ml-auto w-[492px] flex-none flex items-center">
        <div className="w-[92px] flex flex-col items-center text-[18px] leading-[25px] pt-[3px] whitespace-nowrap">
          <span>25%</span>
          <span>CPU利用率</span>
        </div>
        <svg width="18" height="10" viewBox="0 0 18 10" fill="none" className="ml-[7px]">
          <path d="M1,9 L9,1 L17,9" stroke="#fff" strokeWidth="1.1" />
        </svg>
        <svg width="24" height="24" viewBox="0 0 24 24" className="ml-[15px]">
          <circle cx="12" cy="6" r="5" fill="#e99aa8" />
          <circle cx="6" cy="12" r="5" fill="#e99aa8" />
          <circle cx="18" cy="12" r="5" fill="#e99aa8" />
          <circle cx="8" cy="18" r="5" fill="#e08090" />
          <circle cx="16" cy="18" r="5" fill="#e08090" />
          <circle cx="12" cy="12" r="4.5" fill="#f4f6fa" />
        </svg>
        <svg width="16" height="26" viewBox="0 0 16 26" className="ml-[15px]" fill="none">
          <rect x="3" y="1" width="10" height="15" rx="5" fill="#eef1f3" />
          <path d="M1,12 Q1,19 8,19 Q15,19 15,12 M8,19 V24 M4,24 H12" stroke="#eef1f3" />
        </svg>
        <svg width="22" height="22" viewBox="0 0 22 22" className="ml-[20px]" fill="none">
          <path d="M3,20 A17,17 0 0 1 20,3 M7,20 A13,13 0 0 1 20,7 M11,20 A9,9 0 0 1 20,11" stroke="#b9c4cc" strokeWidth="1" />
          <circle cx="17" cy="18" r="1.6" fill="#fff" />
        </svg>
        <svg width="24" height="20" viewBox="0 0 24 20" className="ml-[11px]" fill="none">
          <rect x="5" y="6" width="18" height="11" fill="#eef1f3" stroke="#fff" />
          <path d="M1,1 V5 M5,1 V5 M0,5 H6 V8 Q6,10 3,10 Q0,10 0,8 Z M3,10 V12" stroke="#fff" fill="#1b2b3d" />
        </svg>
        <svg width="24" height="20" viewBox="0 0 24 20" className="ml-[11px]" fill="none">
          <path d="M1,7 H5 L10,2 V18 L5,13 H1 Z" stroke="#e8edf0" />
          <path d="M13,7 Q15,10 13,13 M16,4 Q19,10 16,16" stroke="#c4ced4" />
        </svg>
        <span className="ml-[12px] w-[22px] flex-none text-[22px] font-bold leading-none">中</span>
        <span className="ml-[21px] flex items-center"><SogouS s={24} /></span>
        <div className="ml-[20px] w-[94px] flex-none flex flex-col items-start text-[18px] leading-[25px] pt-[3px] whitespace-nowrap">
          <span className="pl-[30px]">18:36</span>
          <span>2022/10/2</span>
        </div>
      </div>
    </div>
  );
}

export default function App() {
  return (
    <div className={`w-[1728px] h-[1080px] flex flex-col overflow-hidden bg-white ${F}`}>
      <div className="flex-none bg-[linear-gradient(90deg,#006b96,#016f9d_50%,#0474a3)]">
        <TopBar />
        <Menu />
      </div>
      <Ribbon />
      <div className="h-[804px] flex flex-none">
        <Navigator />
        <div className="flex-1 flex flex-col min-w-0">
          <Tabs />
          <div className="relative flex-1 overflow-hidden">
            <Scene />
            <Ime />
          </div>
        </div>
      </div>
      <div className="h-[28px] flex-none bg-white border-t border-[#a8a8a8]" />
      <Taskbar />
    </div>
  );
}
